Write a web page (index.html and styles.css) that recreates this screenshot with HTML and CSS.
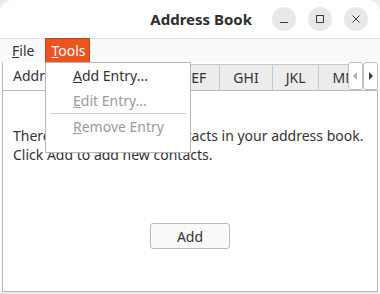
FILE: index.html
```html
<!DOCTYPE html>
<html lang="en">
<head>
<meta charset="UTF-8">
<title>Address Book</title>
<link rel="stylesheet" href="styles.css">
</head>
<body>
<div class="window">
    <div class="titlebar">
        <div class="title">Address Book</div>
        <div class="controls">
            <span class="ctl"><svg width="10" height="10" viewBox="0 0 10 10"><path d="M1 8.5h8" stroke="#3d3d3d" stroke-width="1"/></svg></span>
            <span class="ctl"><svg width="10" height="10" viewBox="0 0 10 10"><rect x="1.5" y="1.5" width="7" height="7" fill="none" stroke="#3d3d3d" stroke-width="1"/></svg></span>
            <span class="ctl"><svg width="10" height="10" viewBox="0 0 10 10"><path d="M1.5 1.5l7 7M8.5 1.5l-7 7" stroke="#3d3d3d" stroke-width="1"/></svg></span>
        </div>
    </div>
    <div class="menubar">
        <span class="menu-item"><u>F</u>ile</span>
        <span class="menu-item open"><u>T</u>ools</span>
    </div>
    <div class="tabwidget">
        <div class="tabbar">
            <div class="tab selected">Address Book</div>
            <div class="tab">ABC</div>
            <div class="tab">DEF</div>
            <div class="tab">GHI</div>
            <div class="tab">JKL</div>
            <div class="tab cut">MNO</div>
            <div class="scroller">
                <span class="scroll-btn disabled"><svg width="5" height="8" viewBox="0 0 5 8"><path d="M4 0v8L0 4z"/></svg></span>
                <span class="scroll-btn"><svg width="5" height="8" viewBox="0 0 5 8"><path d="M1 0v8l4-4z"/></svg></span>
            </div>
        </div>
        <div class="pane">
            <p class="message">There are currently no contacts in your address book.<br>Click Add to add new contacts.</p>
            <button class="add-btn">Add</button>
        </div>
    </div>
    <div class="popup">
        <div class="popup-item"><u>A</u>dd Entry...</div>
        <div class="popup-item disabled"><u>E</u>dit Entry...</div>
        <div class="separator"></div>
        <div class="popup-item disabled"><u>R</u>emove Entry</div>
    </div>
</div>
</body>
</html>
```

FILE: styles.css
```css
body {
    margin: 0;
    background-color: #ececec;
    font-family: "Noto Sans", "DejaVu Sans", sans-serif;
    font-size: 14px;
    color: #333333;
}
.window {
    position: relative;
    width: 380px;
    height: 292px;
    background-color: #ffffff;
    border-radius: 12px 12px 0 0;
    overflow: hidden;
}
.titlebar {
    height: 38px;
    display: flex;
    align-items: center;
    justify-content: flex-end;
    padding-right: 12px;
}
.title {
    font-weight: bold;
    font-size: 15px;
    margin-right: 20px;
    color: #2e2e2e;
}
.controls {
    display: flex;
    gap: 12px;
}
.ctl {
    width: 24px;
    height: 24px;
    border-radius: 50%;
    background-color: #e8e8e8;
    display: flex;
    align-items: center;
    justify-content: center;
}
.menubar {
    height: 23px;
    border-top: 1px solid #e0e0e0;
    background-color: #fafafa;
    display: flex;
    padding-left: 7px;
}
.menu-item {
    padding: 0 4px 0 5px;
    line-height: 23px;
    margin-right: 8px;
}
.menu-item.open {
    background-color: #e95420;
    color: #ffffff;
    outline: 1px solid #c7431a;
}
.tabwidget {
    padding: 0 2px;
}
.tabbar {
    display: flex;
    height: 28px;
    overflow: hidden;
    align-items: flex-end;
}
.tab {
    height: 25px;
    line-height: 25px;
    padding: 0 13px;
    background-color: #ececec;
    border: 1px solid #c8c8c8;
    border-left: none;
    border-bottom: none;
    flex-shrink: 0;
}
.tab.selected {
    height: 28px;
    line-height: 28px;
    background-color: #ffffff;
    border-left: 1px solid #b8b8b8;
    border-color: #b8b8b8;
    padding: 0 10px;
}
.tab.cut {
    flex: 1 1 auto;
    min-width: 0;
    overflow: hidden;
    white-space: nowrap;
    border-right: none;
}
.scroller {
    display: flex;
    height: 28px;
    flex-shrink: 0;
}
.scroll-btn {
    width: 13px;
    height: 26px;
    border: 1px solid #c0c0c0;
    border-radius: 3px;
    background-color: #ffffff;
    display: flex;
    align-items: center;
    justify-content: center;
    fill: #3d3d3d;
}
.scroll-btn.disabled {
    fill: #b0b0b0;
}
.pane {
    height: 200px;
    border: 1px solid #b8b8b8;
    display: flex;
    flex-direction: column;
    align-items: center;
}
.message {
    align-self: stretch;
    margin: 35px 0 0 0;
    padding-left: 10px;
    line-height: 19px;
}
.add-btn {
    margin-top: 59px;
    width: 80px;
    height: 26px;
    font-family: inherit;
    font-size: 14px;
    color: #333333;
    background-color: #fafafa;
    border: 1px solid #bbbbbb;
    border-radius: 3px;
}
.popup {
    position: absolute;
    left: 45px;
    top: 62px;
    width: 144px;
    padding: 0 0 13px;
    background-color: #ffffff;
    border: 1px solid #b8b8b8;
}
.popup-item {
    height: 25px;
    line-height: 25px;
    padding-left: 27px;
}
.popup-item.disabled {
    color: #9a9a9a;
}
.separator {
    height: 1px;
    margin: 0 4px;
    background-color: #d0d0d0;
}
```
